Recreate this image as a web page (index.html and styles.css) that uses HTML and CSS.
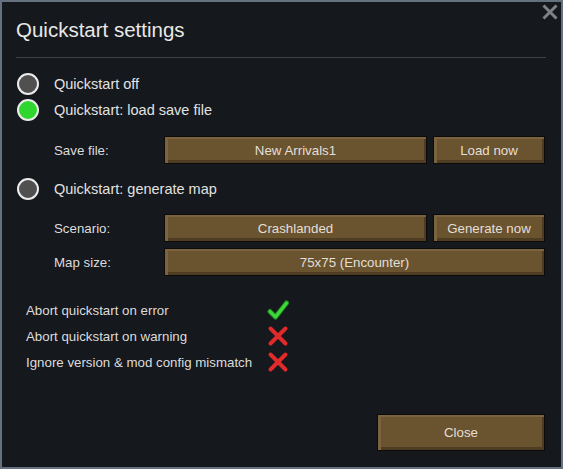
FILE: index.html
```html
<!DOCTYPE html>
<html>
<head>
<meta charset="utf-8">
<link rel="stylesheet" href="styles.css">
</head>
<body>
<div class="window">
  <div class="close-x">
    <svg width="16" height="16" viewBox="0 0 16 16"><path d="M1.5 1.5 L14.5 14.5 M14.5 1.5 L1.5 14.5" stroke="#7f8284" stroke-width="3" fill="none"/></svg>
  </div>
  <h1 class="title">Quickstart settings</h1>
  <div class="divider"></div>

  <div class="radio-row first"><span class="radio"></span><span class="radio-text">Quickstart off</span></div>
  <div class="radio-row"><span class="radio on"></span><span class="radio-text">Quickstart: load save file</span></div>
  <div class="field-row save">
    <span class="field-label">Save file:</span>
    <div class="btn wide">New Arrivals1</div>
    <div class="btn side">Load now</div>
  </div>

  <div class="radio-row gen"><span class="radio"></span><span class="radio-text">Quickstart: generate map</span></div>
  <div class="field-row scenario">
    <span class="field-label">Scenario:</span>
    <div class="btn wide">Crashlanded</div>
    <div class="btn side">Generate now</div>
  </div>
  <div class="field-row mapsize">
    <span class="field-label">Map size:</span>
    <div class="btn full">75x75 (Encounter)</div>
  </div>

  <div class="toggles">
    <div class="toggle-row"><span class="toggle-label">Abort quickstart on error</span>
      <svg class="icon" width="22" height="22" viewBox="0 0 22 22"><path d="M3 12.5 L8.5 18 L19.5 4" stroke="#1f8f1f" stroke-width="5" fill="none" stroke-linecap="round" stroke-linejoin="round"/><path d="M3 12.5 L8.5 18 L19.5 4" stroke="#3fd83c" stroke-width="3" fill="none" stroke-linecap="round" stroke-linejoin="round"/></svg>
    </div>
    <div class="toggle-row"><span class="toggle-label">Abort quickstart on warning</span>
      <svg class="icon" width="22" height="22" viewBox="0 0 22 22"><path d="M3.5 3.5 L18.5 18.5 M18.5 3.5 L3.5 18.5" stroke="#e12a2a" stroke-width="4" fill="none" stroke-linecap="round"/></svg>
    </div>
    <div class="toggle-row"><span class="toggle-label">Ignore version &amp; mod config mismatch</span>
      <svg class="icon" width="22" height="22" viewBox="0 0 22 22"><path d="M3.5 3.5 L18.5 18.5 M18.5 3.5 L3.5 18.5" stroke="#e12a2a" stroke-width="4" fill="none" stroke-linecap="round"/></svg>
    </div>
  </div>

  <div class="footer"><div class="btn close">Close</div></div>
</div>
</body>
</html>
```
FILE: styles.css
```css
* { box-sizing: border-box; }
html, body { margin: 0; padding: 0; background: #15181c; }
body { font-family: "Liberation Sans", Arial, sans-serif; }

.window {
  position: relative;
  width: 563px;
  height: 469px;
  border: 2px solid #65717f;
  background: #15181c;
  display: flex;
  flex-direction: column;
  color: #e0e0e0;
}

.close-x {
  position: absolute;
  top: 2px;
  right: 3px;
  width: 16px;
  height: 16px;
}
.close-x svg { display: block; }

.title {
  margin: 18px 0 0 14px;
  font-size: 20.5px;
  line-height: 20px;
  font-weight: normal;
  color: #e8e8e8;
}

.divider {
  margin: 17px 15px 0 14px;
  height: 1px;
  background: #3f4246;
}

.radio-row {
  height: 26px;
  display: flex;
  align-items: center;
  padding-left: 15px;
  font-size: 14.5px;
  color: #e2e2e2;
}
.radio-row.first { margin-top: 13px; }
.radio-row.gen { margin-top: 12px; }

.radio {
  width: 22px;
  height: 22px;
  border-radius: 50%;
  border: 2px solid #ececec;
  background: #505050;
  flex: none;
}
.radio.on { background: #2ed62e; }
.radio-text { margin-left: 15px; }

.field-row {
  height: 28px;
  display: flex;
  align-items: center;
  padding-left: 52px;
  font-size: 13.3px;
  color: #dcdcdc;
}
.field-row.save { margin-top: 13px; }
.field-row.scenario { margin-top: 12px; }
.field-row.mapsize { margin-top: 6px; }

.field-label { width: 110px; flex: none; }

.btn {
  height: 28px;
  display: flex;
  align-items: center;
  justify-content: center;
  background: #6a532f;
  border: 1px solid #0c0b09;
  box-shadow: inset 3px 2px 0 #7b633f, inset -2px -3px 0 #4e3c23;
  color: #e4dfd6;
  font-size: 13.3px;
  flex: none;
}
.btn.wide { width: 263px; }
.btn.side { width: 112px; margin-left: 6px; }
.btn.full { width: 381px; }

.toggles { margin-top: 21px; }
.toggle-row {
  height: 26px;
  display: flex;
  align-items: center;
  padding-left: 24px;
  font-size: 13.3px;
  color: #dcdcdc;
}
.toggle-label { width: 241px; flex: none; }
.icon { display: block; flex: none; }

.footer {
  margin-top: auto;
  margin-bottom: 16px;
  margin-right: 16px;
  display: flex;
  justify-content: flex-end;
}
.btn.close {
  width: 168px;
  height: 37px;
  font-size: 13.3px;
}
```
